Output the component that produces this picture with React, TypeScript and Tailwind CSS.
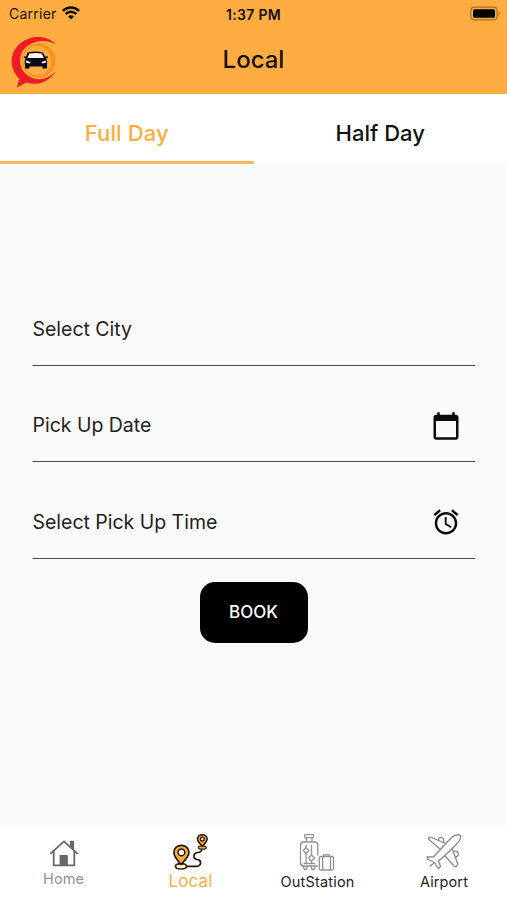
import React from "react";

function Logo() {
  return (
    <svg width="50" height="54" viewBox="10 35 50 54" className="block">
      <path d="M55.500 44C49 37 38 35.500 29 38.500C15 43.500 8.500 57 13 69C14.500 73 17 76.500 19.500 79L16.500 87.500L26.500 82.500C37 86 50 82 55.500 71C49 79 39 81 31 77.500C22 73 18 64 21 54.500C25 43 41 37 55.500 44Z" fill="#ed1c24" />
      <circle cx="38.500" cy="60.500" r="16" fill="#ffad41" stroke="#f6921e" strokeWidth="1.300" />
      <path d="M28 47.500A16.700 16.700 0 1 1 31 75.500A15.500 15.500 0 1 0 28 47.500Z" fill="#f6921e" stroke="#f6921e" strokeWidth=".6" />
      <path d="M27.500 52.500Q36 50.500 43 52.500L46 58Q47.800 60.500 47 64.500V68.500H42.500V66.500H29.500V68.500H25V64.500Q24 60.500 25.500 58.500Z" fill="#070b18" />
      <path d="M29.500 53.500Q36 52.300 41.800 53.500L43.800 58H27.500Z" fill="#fff4df" />
      <path d="M26 60.500L30.500 62L29.800 63.500L26 62.500ZM46 60.500L41.500 62L42.200 63.500L46 62.500Z" fill="#fff" />
      <path d="M24 56.500h3v1.500h-3zM45 56.500h3v1.500h-3z" fill="#070b18" />
    </svg>
  );
}

function WifiIcon() {
  return (
    <svg width="18" height="14" viewBox="0 0 18 14" className="mb-[2px] block" fill="none" stroke="#0d0903" strokeWidth="2.500">
      <path d="M.8 4.900C5.400.4 12.600.4 17.200 4.900" />
      <path d="M3.700 8C6.700 5.100 11.300 5.100 14.300 8" />
      <path d="M6.100 10.500Q9 7.900 11.900 10.500L9 13.500Z" fill="#0d0903" stroke="none" />
    </svg>
  );
}

function BatteryIcon() {
  return (
    <svg width="32" height="16" viewBox="470 5.500 32 16" className="block">
      <rect x="470.900" y="6.700" width="26.200" height="12.600" rx="3.500" fill="none" stroke="#a96f22" strokeWidth="1.200" />
      <rect x="473" y="8.800" width="22" height="8.400" rx="1.500" fill="#000" />
      <path d="M498.500 11Q501 13.200 498.500 15.400Z" fill="#a96f22" />
    </svg>
  );
}

function CalendarIcon() {
  return (
    <svg width="30" height="30" viewBox="0 0 24 24" className="mt-[2px] block" fill="#0b0b0b">
      <path d="M20 3h-1V1h-2v2H7V1H5v2H4c-1.100 0-2 .9-2 2v16c0 1.100.9 2 2 2h16c1.100 0 2-.9 2-2V5c0-1.100-.9-2-2-2zm0 18H4V8h16v13z" />
    </svg>
  );
}

function AlarmIcon() {
  return (
    <svg width="30" height="30" viewBox="0 0 24 24" className="block" fill="#0b0b0b">
      <path d="M22 5.720l-4.600-3.860-1.290 1.530 4.600 3.860L22 5.720zM7.880 3.390L6.600 1.860 2 5.710l1.290 1.530 4.590-3.850zM12.500 8H11v6l4.750 2.850.75-1.230-4-2.370V8zM12 4c-4.970 0-9 4.030-9 9s4.020 9 9 9c4.970 0 9-4.030 9-9s-4.030-9-9-9zm0 16c-3.870 0-7-3.130-7-7s3.130-7 7-7 7 3.130 7 7-3.130 7-7 7z" />
    </svg>
  );
}

function HomeIcon() {
  return (
    <svg width="30" height="28" viewBox="49 839 30 28" className="block" fill="none" stroke="#686868" strokeWidth="1.800" strokeLinejoin="round">
      <path d="M50.300 853.800L64 841.400L77.700 853.800" />
      <path d="M53.700 851V865.400H74.300V851" />
      <path d="M70.800 847V841.700H73.200V849.500" fill="#686868" />
      <path d="M60.500 865V855.800H67V865Z" fill="#686868" />
    </svg>
  );
}

function RouteIcon() {
  return (
    <svg width="36" height="38" viewBox="173 833 36 38" className="block" fill="none" stroke="#211609" strokeWidth="1.700" strokeLinejoin="round">
      <path d="M186.500 866.300H197Q201 866 200.500 862Q200 859.500 197 859.500Q193.500 859 194 855.500Q194.500 852.500 198 852.500Q201.500 852.500 202 848.500" />
      <ellipse cx="181" cy="866.300" rx="5.600" ry="2.700" fill="#fff4df" stroke="#37270f" />
      <ellipse cx="202.300" cy="847.500" rx="4" ry="1.700" fill="#ffad41" stroke="#37270f" strokeWidth="1.300" />
      <path d="M181 864.500Q173.900 856.500 173.900 852.500C173.900 843 188.900 843 188.900 852.500Q188.900 856.500 181 864.500Z" fill="#ffad41" />
      <circle cx="181.400" cy="852.400" r="3.400" fill="#fff" strokeWidth="1.500" />
      <path d="M202.300 846.300Q197.500 841.500 197.500 839C197.500 833.300 207.100 833.300 207.100 839Q207.100 841.500 202.300 846.300Z" fill="#ffad41" strokeWidth="1.600" />
      <circle cx="202.300" cy="839.100" r="1.900" fill="#fff" strokeWidth="1.300" />
    </svg>
  );
}

function LuggageIcon() {
  return (
    <svg width="37" height="38" viewBox="299 833 37 38" className="block" fill="none" stroke="#939393" strokeWidth="1.300" strokeLinejoin="round">
      <rect x="304.600" y="834.600" width="9" height="3" rx=".8" />
      <path d="M306.300 837.600V842M312 837.600V842M317.800 855.500V845Q317.800 842 314.800 842H303.500Q300.500 842 300.500 845V863Q300.500 866 303.500 866H317.800" />
      <path d="M303 866L304.500 869.500H306.500L307.500 866M311 866L312 869.500H314L315.300 866" />
      <path d="M306 845V848M306 853.500V863.500M311.500 845V855M311.500 861V863.500M303.500 863.500H315" />
      <path d="M303.300 850.500L306 847.500L309 850.500L306 853.500ZM308.500 858L311.500 855L314.500 858L311.500 861Z" />
      <rect x="319.300" y="856.500" width="14.200" height="13.500" rx="1.500" />
      <path d="M323.500 856.500V854.800H329.500V856.500M322.700 856.500V870M330.500 856.500V870" />
    </svg>
  );
}

function PlaneIcon() {
  return (
    <svg width="36" height="37" viewBox="426 833 36 37" className="block" fill="none" stroke="#8c8c8c" strokeWidth="1.350" strokeLinejoin="round" strokeLinecap="round">
      <path d="M445.500 843.500L452.500 836.800Q455.500 834.500 459 834.800Q460.800 835 460.500 837.500Q460.500 840 457.500 843L452.200 848.500L457.800 864L456 866.800Q454.500 867 453.500 865.500L444.800 855.500L438.500 861L440.500 866.500L438.500 868.600L434.500 862.500L428 859.500L427 857L433.500 856.800L440.500 849.500L429 839.500Q428 838.500 429 837.500Q430 836.800 431.500 837.500Z" />
      <path d="M438.500 840.300Q438.500 837.200 441.300 837.400Q444.500 838 443.500 842.300M454.200 851.300Q457.800 850.500 458.300 853.500Q458.500 856.500 455.800 857M434 863L430.500 866M440.500 849.500L445.500 843.500M444.800 855.500L451.800 848.700" />
    </svg>
  );
}

type FieldProps = { label: string; icon?: React.ReactNode };

function Field({ label, icon }: FieldProps) {
  return (
    <div className="flex h-[96.500px] items-end border-b-[1.500px] border-[#4a4a4a]">
      <div className="flex h-[72px] w-full items-center justify-between">
        <span className="pt-[2px] text-[19.500px] tracking-[-0.020px] text-[#222]">{label}</span>
        <span className="mr-[13px] flex w-8 justify-center">{icon}</span>
      </div>
    </div>
  );
}

export default function App() {
  return (
    <div className="flex h-[900px] w-[507px] flex-col overflow-hidden whitespace-nowrap bg-[#fafafa] font-[Inter,sans-serif]">
      <header className="h-[94px] bg-[#ffad41] text-[#160e04]">
        <div className="grid h-7 grid-cols-3 items-center">
          <div className="flex items-center gap-[5px] pl-[9px]">
            <span className="pb-[2px] text-[14px] tracking-[0.250px]">Carrier</span>
            <WifiIcon />
          </div>
          <span className="text-center text-[14px] font-semibold tracking-[0.300px]">1:37 PM</span>
          <div className="flex justify-end pr-[5px]"><BatteryIcon /></div>
        </div>
        <div className="grid h-[66px] grid-cols-3 items-start">
          <div className="pl-[10px] pt-[7px]"><Logo /></div>
          <h1 className="pt-[14px] text-center text-[24px] font-medium leading-9">Local</h1>
        </div>
      </header>

      <nav className="grid h-[70px] grid-cols-2 bg-white text-[22px] font-medium">
        <button className="border-b-[3px] border-[#ffb75a] pt-[11px] tracking-[0.100px] text-[#ffad41]">Full Day</button>
        <button className="pb-[3px] pt-[11px] text-[#111]">Half Day</button>
      </nav>

      <main className="flex flex-1 flex-col px-[32.500px] pt-[105px]">
        <Field label="Select City" />
        <Field label="Pick Up Date" icon={<CalendarIcon />} />
        <Field label="Select Pick Up Time" icon={<AlarmIcon />} />
        <button className="mt-[23px] h-[61px] w-[108px] self-center rounded-[15px] bg-black pt-[2px] text-[17px] font-medium text-white">BOOK</button>
      </main>

      <footer className="grid h-[75px] grid-cols-[127px_127px_127px_126px] bg-white">
        <div className="flex flex-col items-center pt-[14px]">
          <HomeIcon />
          <span className="mt-[2px] text-[14.500px] leading-5 tracking-[0.050px] text-[#929292]">Home</span>
        </div>
        <div className="flex flex-col items-center pt-[8px]">
          <RouteIcon />
          <span className="text-[17px] leading-5 tracking-[0.100px] text-[#ffad41]">Local</span>
        </div>
        <div className="flex flex-col items-center pt-[8px]">
          <LuggageIcon />
          <span className="mt-[1px] text-[14.500px] leading-5 tracking-[0.200px] text-[#222]">OutStation</span>
        </div>
        <div className="flex flex-col items-center pt-[8px]">
          <PlaneIcon />
          <span className="mt-[2px] text-[14.500px] leading-5 tracking-[0.100px] text-[#222]">Airport</span>
        </div>
      </footer>
    </div>
  );
}
